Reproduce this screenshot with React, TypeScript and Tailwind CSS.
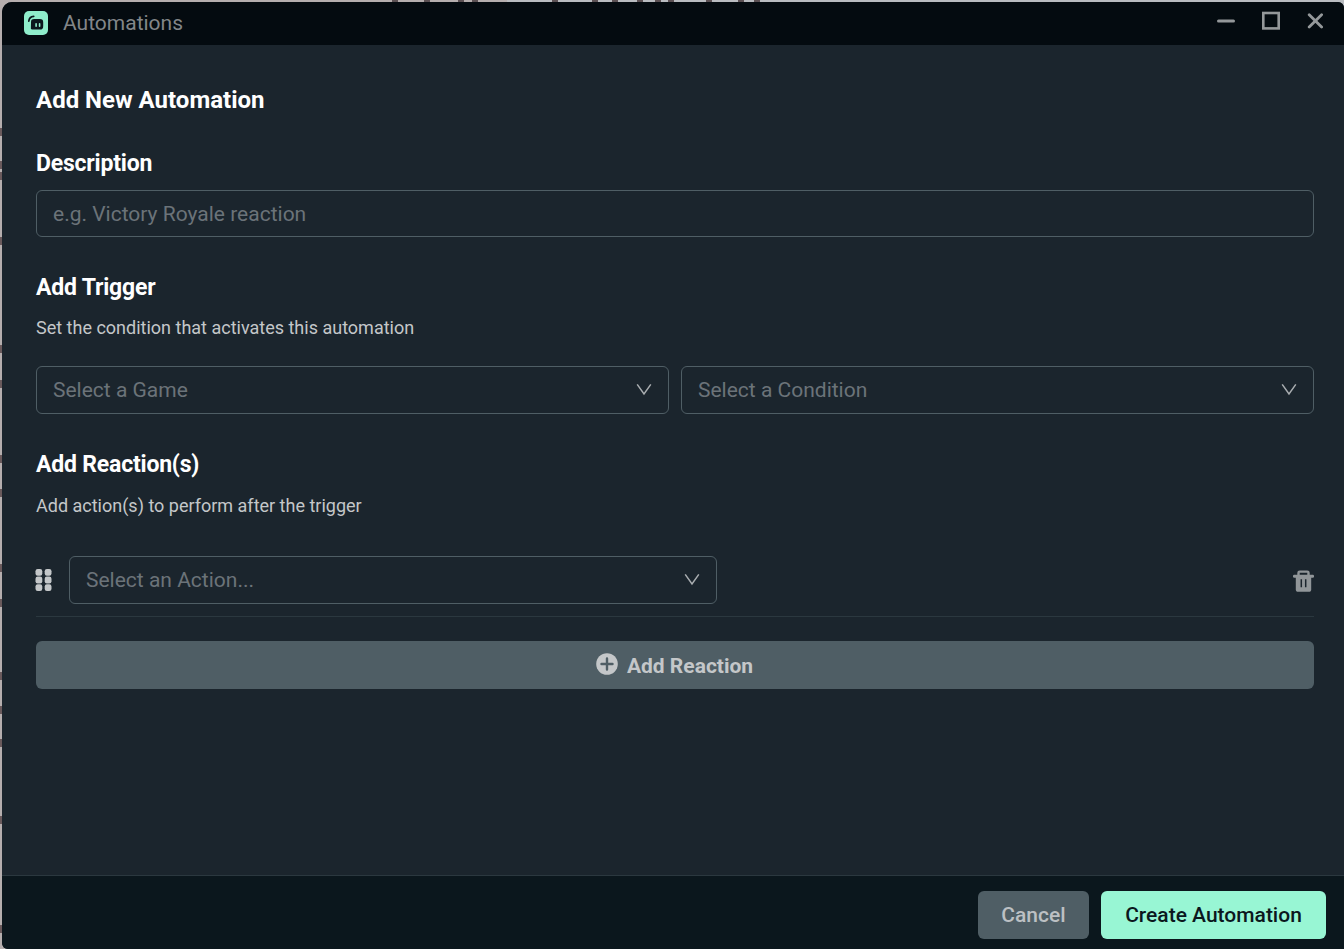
import type { ReactNode } from 'react';
import clsx from 'clsx';

interface SelectFieldProps {
  label: string;
  className?: string;
}

function ChevronIcon() {
  return (
    <svg width="16" height="14" viewBox="0 0 16 14" fill="none" className="text-[#a9adb0]">
      <path d="M1.2 1.4 8 11l6.8-9.6" stroke="currentColor" strokeWidth="1.5" />
    </svg>
  );
}

function SelectField({ label, className }: SelectFieldProps) {
  return (
    <button
      type="button"
      className={clsx(
        'flex h-12 items-center justify-between rounded-md border border-[#4f5e65] pr-4 pl-4 text-left text-[21px] text-[#6b7379]',
        className,
      )}
    >
      <span className="pt-0.5">{label}</span>
      <ChevronIcon />
    </button>
  );
}

function SectionTitle({ children }: { children: ReactNode }) {
  return <h2 className="h-8 pt-px text-[23px] leading-8 font-bold tracking-[-0.2px] text-white">{children}</h2>;
}

function AppLogo() {
  return (
    <svg width="24" height="24" viewBox="0 0 24 24" fill="none" className="-mt-0.5">
      <rect width="24" height="24" rx="5" fill="#8fedcb" />
      <path d="M4.8 10.2C5.1 7.400 6.900 5.600 9.700 5.400" stroke="#0b171d" strokeWidth="1.700" strokeLinecap="round" />
      <path
        d="M10.300 8h5.400c2.700 0 3.500.9 3.500 3.500v3.400c0 2.700-.8 3.600-3.500 3.600H8.100c-1 0-1.400-.5-1.200-1.400l.1-5.600C7 8.900 7.800 8 10.300 8Z"
        fill="#0b171d"
      />
      <path d="M12.100 12.700v2.600M15.600 12.700v2.600" stroke="#8fedcb" strokeWidth="1.600" strokeLinecap="round" />
    </svg>
  );
}

function TitleBar() {
  return (
    <header className="flex h-[43px] shrink-0 items-center justify-between bg-[#040b10] pr-[21px] pl-[22px]">
      <div className="flex items-center gap-[15px]">
        <AppLogo />
        <span className="pb-0.5 text-[21px] leading-6 text-[#828689]">Automations</span>
      </div>
      <div className="flex items-center gap-[26px] pb-1.5 text-[#94989a]">
        <svg width="19" height="20" viewBox="0 0 19 20">
          <rect x="0" y="8.500" width="18" height="3" rx="1.500" fill="currentColor" />
        </svg>
        <svg width="19" height="20" viewBox="0 0 19 20" fill="none">
          <rect x="1.300" y="2" width="15.400" height="15.400" stroke="currentColor" strokeWidth="2.600" />
        </svg>
        <svg width="16" height="20" viewBox="0 0 16 20">
          <path
            d="m2.200 3.700 12.400 12.400M14.600 3.700 2.200 16.100"
            stroke="currentColor"
            strokeWidth="2.800"
            strokeLinecap="round"
          />
        </svg>
      </div>
    </header>
  );
}

function DragHandle() {
  return (
    <svg width="16" height="22" viewBox="0 0 16 22" fill="#c4c7c9" className="overflow-visible">
      {[0, 7.6, 15.2].map((y) => (
        <g key={y}>
          <rect x="-0.500" y={y} width="6.800" height="6.800" rx="2.200" />
          <rect x="8.700" y={y} width="6.800" height="6.800" rx="2.200" />
        </g>
      ))}
    </svg>
  );
}

function TrashIcon() {
  return (
    <svg width="21" height="22" viewBox="0 0 21 22" fill="none">
      <path d="M5.500 5V2.800c0-.7.400-1.200 1.200-1.200h7.600c.8 0 1.200.5 1.200 1.200V5" stroke="#919699" strokeWidth="2.400" />
      <rect y="4.700" width="21" height="3" rx="1.200" fill="#919699" />
      <path d="M2.800 6h15.400v13.400c0 1.500-.8 2.400-2.400 2.400H5.200c-1.600 0-2.400-.9-2.400-2.400V6Z" fill="#919699" />
      <path d="M8.300 9.200v8M12.700 9.200v8" stroke="#1b252d" strokeWidth="1.500" />
    </svg>
  );
}

function PlusCircle() {
  return (
    <svg width="22" height="22" viewBox="0 0 22 22">
      <circle cx="11" cy="11" r="10.800" fill="#c4c7c9" />
      <path d="M11 5.500v11M5.500 11h11" stroke="#4f5e65" strokeWidth="2.400" strokeLinecap="round" />
    </svg>
  );
}

// Bits of the page behind the window that stay visible along its top and left edges
const LEFT_MARKS = [128, 161, 172, 237, 345, 380, 455, 489, 564, 599, 672, 706, 739, 816, 925];
const TOP_MARKS = [392, 424, 458, 472, 552, 592, 612, 637, 655, 668, 706, 738, 754];

function Backdrop() {
  return (
    <div className="absolute inset-0 overflow-hidden bg-[#b5aeae]">
      <div className="absolute top-0 right-0 h-3 w-[837px] bg-[#b9bcc0]" />
      {TOP_MARKS.map((left) => (
        <span key={left} className="absolute top-0 h-0.5 w-1.5 bg-[#5b5053]" style={{ left }} />
      ))}
      {LEFT_MARKS.map((top) => (
        <span key={top} className="absolute left-0 h-2 w-0.5 bg-[#6a5a5c]" style={{ top }} />
      ))}
    </div>
  );
}

export default function App() {
  return (
    <div className="relative h-[949px] w-[1344px] overflow-hidden pt-0.5 pl-0.5 font-['Roboto',sans-serif]">
      <Backdrop />
      <div className="relative flex h-full flex-col overflow-hidden rounded-tl-[10px] rounded-tr-[6px] rounded-bl-[6px] bg-[#1b252d]">
        <TitleBar />

        <main className="flex grow flex-col pt-[39px] pr-[30px] pl-[34px]">
          <h1 className="h-8 text-2xl leading-8 font-bold text-white">Add New Automation</h1>

          <div className="mt-[31px]">
            <SectionTitle>Description</SectionTitle>
            <input
              type="text"
              placeholder="e.g. Victory Royale reaction"
              className="mt-[11px] block h-[47px] w-full rounded-md border border-[#4f5e65] px-4 text-[21px] text-white placeholder:text-[#6b7379]"
            />
          </div>

          <div className="mt-[34px]">
            <SectionTitle>Add Trigger</SectionTitle>
            <p className="mt-[13px] h-6 text-lg leading-6 text-[#c4c7c9]">
              Set the condition that activates this automation
            </p>
            <div className="mt-[26px] grid grid-cols-2 gap-3">
              <SelectField label="Select a Game" />
              <SelectField label="Select a Condition" />
            </div>
          </div>

          <div className="mt-[34px]">
            <SectionTitle>Add Reaction(s)</SectionTitle>
            <p className="mt-3.5 h-6 text-lg leading-6 text-[#c4c7c9]">
              Add action(s) to perform after the trigger
            </p>
            <div className="mt-[38px] flex items-center border-b border-[#2b383f] pb-3">
              <DragHandle />
              <SelectField label="Select an Action..." className="ml-[17px] w-[648px]" />
              <button type="button" className="ml-auto pt-px">
                <TrashIcon />
              </button>
            </div>
            <button
              type="button"
              className="mt-6 flex h-12 w-full items-center justify-center gap-[9px] rounded-md bg-[#4f5e65] pr-px text-[21px] font-bold text-[#c4c7c9]"
            >
              <span className="pb-[3px]">
                <PlusCircle />
              </span>
              <span className="pt-[3px]">Add Reaction</span>
            </button>
          </div>
        </main>

        <footer className="flex h-[74px] shrink-0 items-start justify-end gap-3 border-t border-[#2b383f] bg-[#0b171d] pt-[15px] pr-[18px] text-[21px] font-medium">
          <button type="button" className="h-12 w-[111px] rounded-md bg-[#4f5e65] pt-0.5 text-[#bcc0c3]">
            Cancel
          </button>
          <button type="button" className="h-12 w-[225px] rounded-md bg-[#98f6d4] pt-0.5 text-[#0b171d]">
            Create Automation
          </button>
        </footer>
      </div>
    </div>
  );
}
